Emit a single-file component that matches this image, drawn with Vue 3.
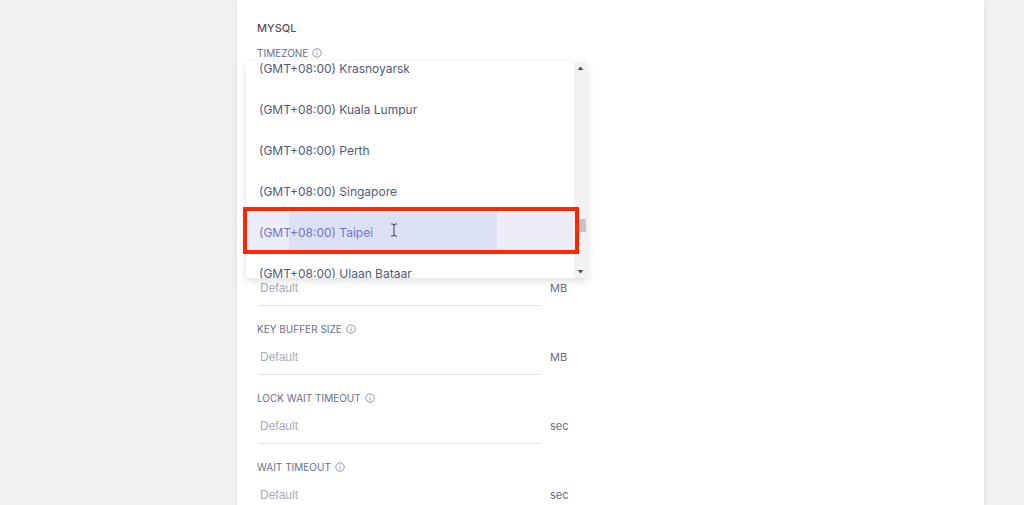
<template>
    <main class="page">
        <form class="card" @submit.prevent>
            <h2>MYSQL</h2>

            <div class="label" id="timezone-label">
                TIMEZONE
                <svg class="info" viewBox="0 0 10 10" aria-hidden="true">
                    <circle cx="5" cy="5" r="4.2" />
                    <path d="M5 4.4V7.3M5 2.6V3.4" />
                </svg>
            </div>

            <!-- Open timezone menu -->
            <div class="menu">
                <div class="viewport">
                    <ul role="listbox" aria-labelledby="timezone-label">
                        <li
                            v-for="zone in zones"
                            :key="zone"
                            role="option"
                            :aria-selected="zone === selected"
                            :class="{ active: zone === selected }"
                            @click="selected = zone"
                        >
                            (GMT+08:00) {{ zone }}
                        </li>
                    </ul>
                </div>
                <div class="scrollbar">
                    <svg viewBox="0 0 13 13"><path d="M3.5 8L6.5 4.5L9.5 8Z" /></svg>
                    <span class="thumb"></span>
                    <svg viewBox="0 0 13 13"><path d="M3.5 5L6.5 8.5L9.5 5Z" /></svg>
                </div>
                <div class="marker"></div>
                <svg class="cursor" viewBox="0 0 8 14">
                    <path d="M1 1H3L4 2L5 1H7M4 2V12M1 13H3L4 12L5 13H7" />
                </svg>
            </div>

            <div v-for="field in fields" :key="field.id" class="field">
                <label v-if="field.label" class="label" :for="field.id">
                    {{ field.label }}
                    <svg class="info" viewBox="0 0 10 10" aria-hidden="true">
                        <circle cx="5" cy="5" r="4.2" />
                        <path d="M5 4.4V7.3M5 2.6V3.4" />
                    </svg>
                </label>
                <div class="row">
                    <input
                        :id="field.id"
                        v-model="field.value"
                        type="text"
                        placeholder="Default"
                        :aria-label="field.label ? null : field.unit"
                    />
                    <span class="unit">{{ field.unit }}</span>
                </div>
            </div>
        </form>
    </main>
</template>

<script setup>
import { ref } from "vue";

const zones = ["Krasnoyarsk", "Kuala Lumpur", "Perth", "Singapore", "Taipei", "Ulaan Bataar"];
const selected = ref("Taipei");

const fields = ref([
    { id: "size", label: "", unit: "MB", value: "" },
    { id: "key-buffer", label: "KEY BUFFER SIZE", unit: "MB", value: "" },
    { id: "lock-wait", label: "LOCK WAIT TIMEOUT", unit: "sec", value: "" },
    { id: "wait", label: "WAIT TIMEOUT", unit: "sec", value: "" },
]);
</script>

<style>
body {
    margin: 0;
    background: #f2f2f2;
}
</style>

<style scoped>
.page {
    height: 100vh;
    overflow: hidden;
    padding: 0 40px 0 237px;
    box-sizing: border-box;
    font-family: Inter, "Open Sans", sans-serif;
    color: #505a7a;
}

.card {
    min-height: 100%;
    box-sizing: border-box;
    padding: 20px 20px 0;
    background: #fff;
    box-shadow: 0 0 8px rgba(0, 0, 0, 0.08);
}

h2 {
    margin: 0 0 9px;
    font-size: 11px;
    line-height: 16px;
    font-weight: 500;
    color: #55555c;
}

.label {
    display: flex;
    align-items: center;
    gap: 4px;
    font-size: 10px;
    line-height: 16px;
    color: #68708c;
}

.info {
    width: 10px;
    height: 10px;
    fill: none;
    stroke: #868ca2;
    stroke-width: 0.9;
}

.menu {
    position: relative;
    z-index: 1;
    display: flex;
    max-width: 341px;
    height: 216px;
    margin: 1px 0 0 -11px;
    background: #fff;
    box-shadow: 0 3px 8px rgba(0, 0, 0, 0.13);
}

.viewport {
    flex: 1;
    overflow: hidden;
}

ul {
    margin: -14px 0 0;
    padding: 0;
    list-style: none;
}

li {
    padding-left: 13px;
    font-size: 12px;
    line-height: 41px;
    color: #505b7a;
    cursor: pointer;
}

li.active {
    color: #7274cc;
    background: linear-gradient(90deg, transparent 43px, #dce0f4 43px, #dce0f4 251px, transparent 251px) #edecf9;
}

.scrollbar {
    display: flex;
    flex-direction: column;
    width: 13px;
    background: #f2f2f2;
}

.scrollbar svg {
    width: 13px;
    height: 13px;
    fill: #505050;
}

.thumb {
    height: 13px;
    margin: 144px 1px auto 2px;
    background: #c4c4c4;
}

/* Red frame around the chosen timezone */
.marker {
    position: absolute;
    top: 145px;
    left: -3px;
    right: 8px;
    height: 47px;
    box-sizing: border-box;
    border: 4px solid #ff2600;
    pointer-events: none;
}

.cursor {
    position: absolute;
    top: 161px;
    left: 144px;
    width: 8px;
    height: 14px;
    fill: none;
    stroke: #3c4050;
}

.field + .field {
    margin-top: 15px;
}

.field .label + .row {
    padding-top: 10px;
}

.row {
    display: flex;
    gap: 9px;
    margin-left: 1px;
    line-height: 20px;
}

input {
    flex: 0 1 283px;
    min-width: 0;
    height: 28px;
    box-sizing: border-box;
    padding: 0 2px 8px;
    border: none;
    border-bottom: 1px solid #e2e2e5;
    border-radius: 0;
    background: transparent;
    font-family: "Liberation Sans", Arial, sans-serif;
    font-size: 12px;
    color: #505a7a;
    outline: none;
}

input::placeholder {
    color: #a9abb5;
}

.unit {
    font-size: 11px;
    color: #646c86;
}
</style>
